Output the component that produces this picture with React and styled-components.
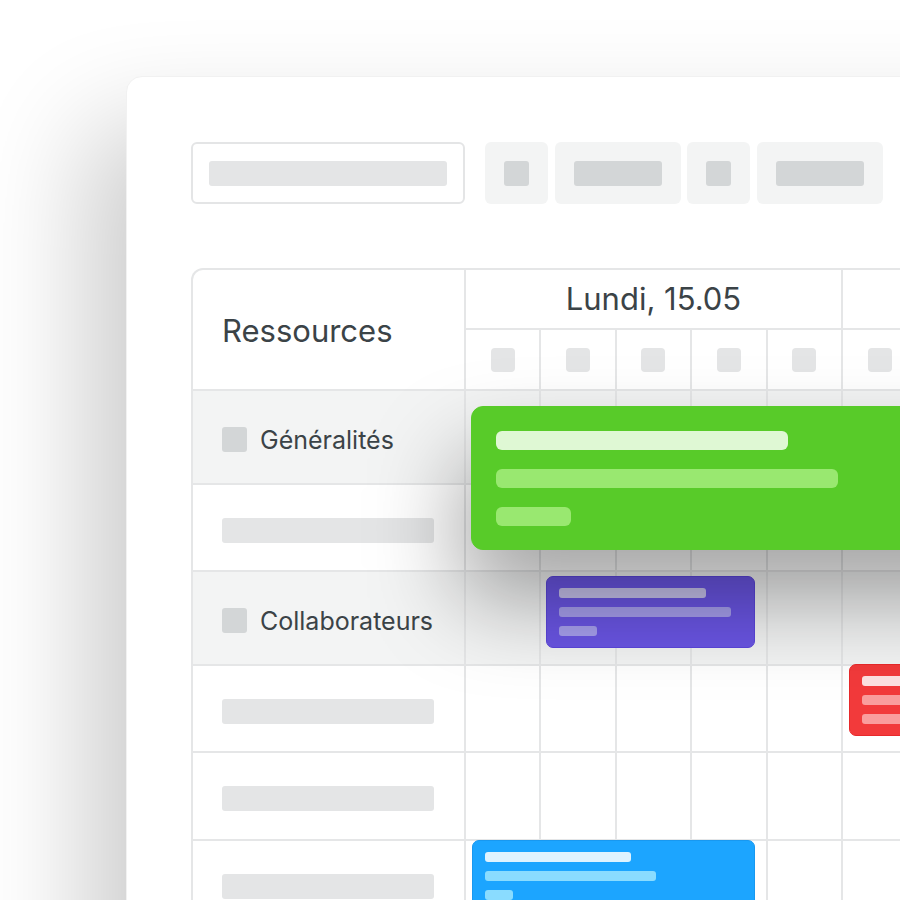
import React from "react";
import styled, { createGlobalStyle } from "styled-components";

const GlobalStyle = createGlobalStyle`
  html, body {
    margin: 0;
    padding: 0;
    height: 100%;
    overflow: hidden;
    background: #ffffff;
  }
  body {
    font-family: Inter, "Noto Sans", sans-serif;
    color: #3b4347;
  }
`;

const Page = styled.div`
  width: 900px;
  height: 900px;
  overflow: hidden;
  padding: 76px 0 0 126px;
  box-sizing: border-box;
`;

const Panel = styled.div`
  width: 960px;
  min-height: 1000px;
  background: #ffffff;
  border: 1px solid #f1f1f1;
  border-radius: 16px 0 0 0;
  box-shadow: -40px 50px 110px rgba(0, 0, 0, 0.2);
  padding: 65px 0 0 64px;
  box-sizing: border-box;
`;

const Toolbar = styled.div`
  display: flex;
  align-items: center;
  gap: 6.5px;
  height: 62px;
`;

const Search = styled.div`
  width: 274px;
  height: 62px;
  box-sizing: border-box;
  border: 2px solid #e4e5e6;
  border-radius: 6px;
  display: flex;
  align-items: center;
  padding: 0 16px;
  margin-right: 13.5px;
`;

const Skeleton = styled.div`
  width: ${(p) => p.w}px;
  height: ${(p) => p.h || 25}px;
  background: ${(p) => p.color || "#e4e5e6"};
  border-radius: ${(p) => p.r || 3}px;
  flex-shrink: 0;
`;

const ToolButton = styled.div`
  width: ${(p) => (p.wide ? 126 : 63)}px;
  height: 62px;
  background: #f3f4f4;
  border-radius: 6px;
  display: flex;
  align-items: center;
  justify-content: center;
`;

const Board = styled.div`
  position: relative;
  margin-top: 64px;
`;

const Grid = styled.div`
  display: grid;
  grid-template-columns: 271px repeat(10, 73.4px);
  grid-template-rows: 58px 59px 92px 85px 92px 85px 86px 86px;
  gap: 2px;
  padding: 2px;
  background: #e5e6e7;
  border-radius: 12px 0 0 0;
  width: max-content;
`;

const Cell = styled.div`
  background: ${(p) => (p.group ? "#f3f4f4" : "#ffffff")};
  display: flex;
  align-items: center;
  justify-content: center;
`;

const ResourceHead = styled.div`
  grid-row: 1 / span 2;
  background: #ffffff;
  border-radius: 10px 0 0 0;
  display: flex;
  align-items: center;
  padding-left: 29px;
  font-size: 31px;
  font-weight: 400;
  color: #3b4347;
  padding-top: 2px;
`;

const DayHead = styled.div`
  grid-column: span 5;
  background: #ffffff;
  display: flex;
  align-items: center;
  justify-content: center;
  font-size: 31px;
  color: #3b4347;
  padding-bottom: 2px;
`;

const ResourceCell = styled.div`
  background: ${(p) => (p.group ? "#f3f4f4" : "#ffffff")};
  display: flex;
  align-items: center;
  gap: 13px;
  padding-left: 29px;
  padding-top: 5px;
  font-size: 25px;
  color: #3b4347;
`;

const Event = styled.div`
  position: absolute;
  left: ${(p) => p.x}px;
  top: ${(p) => p.y}px;
  width: ${(p) => p.w}px;
  height: ${(p) => p.h}px;
  background: ${(p) => p.bg};
  border: 1px solid ${(p) => p.edge || p.bg};
  box-sizing: border-box;
  border-radius: ${(p) => (p.big ? 12 : 7)}px;
  display: flex;
  flex-direction: column;
  gap: ${(p) => (p.big ? 19 : 9)}px;
  padding: ${(p) => (p.big ? "24px 24px" : "11px 12px")};
  z-index: ${(p) => (p.big ? 3 : 1)};
  box-shadow: ${(p) =>
    p.big ? "-10px 50px 90px rgba(0, 0, 0, 0.36)" : "none"};
`;

const Bar = styled.div`
  width: ${(p) => p.w}px;
  height: ${(p) => p.h}px;
  background: ${(p) => p.color};
  border-radius: ${(p) => (p.h > 14 ? 6 : 3)}px;
  flex-shrink: 0;
`;

const rows = [
  { group: true, label: "Généralités" },
  { group: false },
  { group: true, label: "Collaborateurs" },
  { group: false },
  { group: false },
  { group: false },
];

const hours = Array.from({ length: 10 }, (_, i) => i);

const events = [
  {
    id: "green",
    big: true,
    x: 280,
    y: 138,
    w: 640,
    h: 144,
    bg: "#58cb29",
    bars: [
      { w: 292, h: 19, color: "#dff8d4" },
      { w: 342, h: 19, color: "#99e870" },
      { w: 75, h: 19, color: "#99e870" },
    ],
  },
  {
    id: "purple",
    x: 355,
    y: 308,
    w: 209,
    h: 72,
    bg: "#6a55e4",
    edge: "#5b46dc",
    bars: [
      { w: 147, h: 10, color: "#c8c3ee" },
      { w: 172, h: 10, color: "#a79fee" },
      { w: 38, h: 10, color: "#a79fee" },
    ],
  },
  {
    id: "red",
    x: 658,
    y: 396,
    w: 120,
    h: 72,
    bg: "#f23a3b",
    edge: "#e8292b",
    bars: [
      { w: 100, h: 10, color: "#fde1e1" },
      { w: 100, h: 10, color: "#fa9d9d" },
      { w: 100, h: 10, color: "#fa9d9d" },
    ],
  },
  {
    id: "blue",
    x: 281,
    y: 572,
    w: 283,
    h: 130,
    bg: "#1ca5ff",
    edge: "#1898f0",
    bars: [
      { w: 146, h: 10, color: "#dff3ff" },
      { w: 171, h: 10, color: "#8adcff" },
      { w: 28, h: 10, color: "#8adcff" },
    ],
  },
];

const App = () => {
  return (
    <Page>
      <GlobalStyle />
      <Panel>
        <Toolbar>
          <Search>
            <Skeleton w={238} />
          </Search>
          <ToolButton>
            <Skeleton w={25} color="#d3d6d7" />
          </ToolButton>
          <ToolButton wide>
            <Skeleton w={88} color="#d3d6d7" />
          </ToolButton>
          <ToolButton>
            <Skeleton w={25} color="#d3d6d7" />
          </ToolButton>
          <ToolButton wide>
            <Skeleton w={88} color="#d3d6d7" />
          </ToolButton>
        </Toolbar>

        <Board>
          <Grid>
            <ResourceHead>Ressources</ResourceHead>
            <DayHead>Lundi, 15.05</DayHead>
            <DayHead />
            {hours.map((h) => (
              <Cell key={"h" + h}>
                <Skeleton w={24} h={24} r={4} />
              </Cell>
            ))}
            {rows.map((row, i) => (
              <React.Fragment key={i}>
                <ResourceCell group={row.group}>
                  {row.label ? (
                    <>
                      <Skeleton w={25} color="#d3d6d7" />
                      <span>{row.label}</span>
                    </>
                  ) : (
                    <Skeleton w={212} />
                  )}
                </ResourceCell>
                {hours.map((h) => (
                  <Cell key={h} group={row.group} />
                ))}
              </React.Fragment>
            ))}
          </Grid>

          {events.map((ev) => (
            <Event key={ev.id} {...ev}>
              {ev.bars.map((b, j) => (
                <Bar key={j} w={b.w} h={b.h} color={b.color} />
              ))}
            </Event>
          ))}
        </Board>
      </Panel>
    </Page>
  );
};

export default App;
